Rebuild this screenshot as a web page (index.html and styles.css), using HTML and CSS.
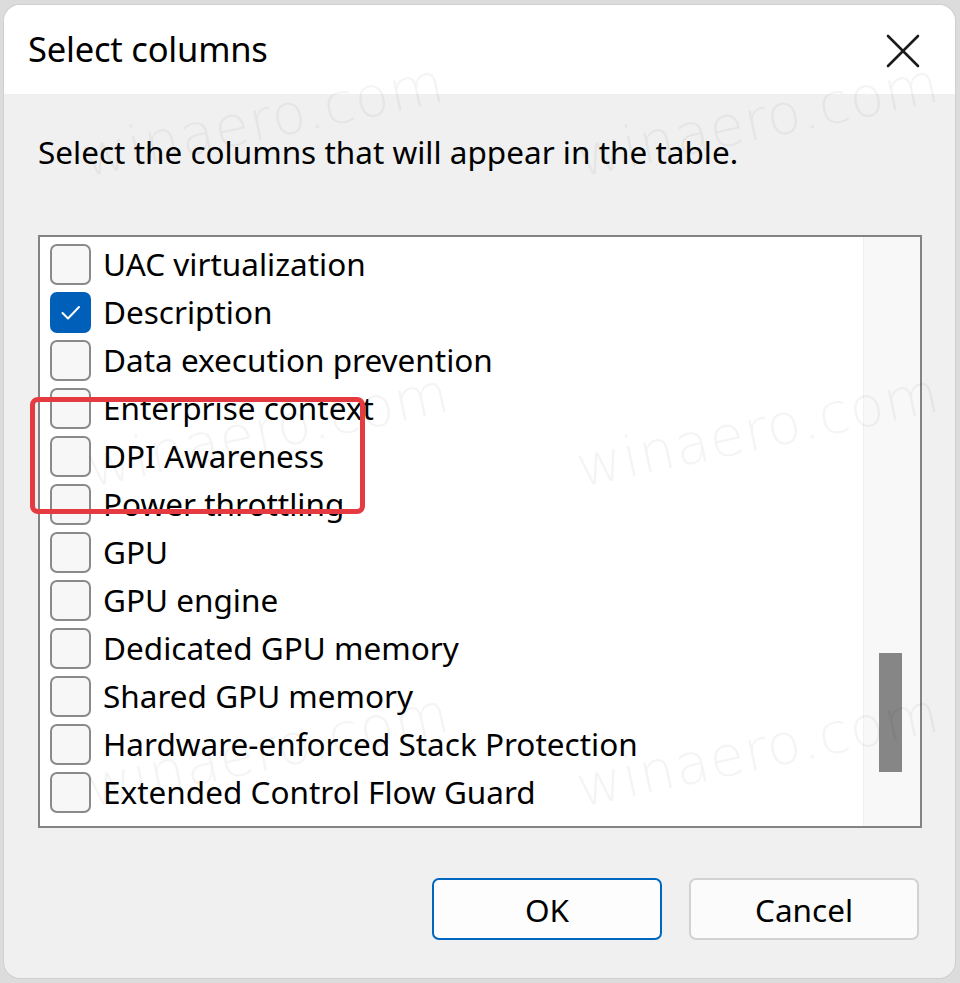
FILE: index.html
```html
<!DOCTYPE html>
<html lang="en">
<head>
<meta charset="utf-8">
<title>Select columns</title>
<link rel="stylesheet" href="styles.css">
</head>
<body>
<div class="dialog">
  <div class="titlebar">
    <span class="title">Select columns</span>
    <svg class="close" width="34" height="34" viewBox="0 0 34 34" aria-label="Close">
      <path d="M2 2 L32 32 M32 2 L2 32" stroke="#1b1b1b" stroke-width="2.6" fill="none" stroke-linecap="round"/>
    </svg>
  </div>
  <div class="content">
    <p class="intro">Select the columns that will appear in the table.</p>
    <div class="listbox">
      <div class="items">
        <div class="row"><span class="cb"></span><span class="label">UAC virtualization</span></div>
        <div class="row"><span class="cb checked"><svg width="41" height="41" viewBox="0 0 41 41"><path d="M12.5 21 L18 26.5 L29 15" stroke="#fff" stroke-width="2" fill="none" stroke-linecap="round" stroke-linejoin="round"/></svg></span><span class="label">Description</span></div>
        <div class="row"><span class="cb"></span><span class="label">Data execution prevention</span></div>
        <div class="row"><span class="cb"></span><span class="label">Enterprise context</span></div>
        <div class="row"><span class="cb"></span><span class="label">DPI Awareness</span></div>
        <div class="row"><span class="cb"></span><span class="label">Power throttling</span></div>
        <div class="row"><span class="cb"></span><span class="label">GPU</span></div>
        <div class="row"><span class="cb"></span><span class="label">GPU engine</span></div>
        <div class="row"><span class="cb"></span><span class="label">Dedicated GPU memory</span></div>
        <div class="row"><span class="cb"></span><span class="label">Shared GPU memory</span></div>
        <div class="row"><span class="cb"></span><span class="label">Hardware-enforced Stack Protection</span></div>
        <div class="row"><span class="cb"></span><span class="label">Extended Control Flow Guard</span></div>
      </div>
      <div class="scrollbar"><div class="thumb"></div></div>
    </div>
    <div class="buttons">
      <button class="btn default">OK</button>
      <button class="btn">Cancel</button>
    </div>
  </div>
  <div class="highlight"></div>
  <span class="wm wm1">winaero.com</span>
  <span class="wm wm2">winaero.com</span>
  <span class="wm wm3">winaero.com</span>
  <span class="wm wm4">winaero.com</span>
  <span class="wm wm5">winaero.com</span>
  <span class="wm wm6">winaero.com</span>
</div>
</body>
</html>
```

FILE: styles.css
```css
html, body {
  margin: 0;
  height: 100%;
}
body {
  background: #dcdcdc;
  padding: 5px 5px 5px 4px;
  box-sizing: border-box;
  font-family: "Noto Sans", "Open Sans", sans-serif;
  color: #000;
}
.dialog {
  position: relative;
  width: 951px;
  height: 973px;
  background: #f0f0f0;
  border-radius: 16px;
  overflow: hidden;
  box-shadow: 0 0 0 1px #cfcfcf;
}
.titlebar {
  height: 89px;
  background: #ffffff;
  display: flex;
  align-items: center;
  justify-content: space-between;
  padding: 0 35px 0 24px;
}
.title {
  font-size: 34.5px;
  letter-spacing: -0.2px;
  margin-top: -2px;
}
.close {
  margin-top: 2px;
}
.content {
  padding: 38px 0 0 34px;
}
.intro {
  margin: 0;
  font-size: 31.5px;
  line-height: 40px;
}
.listbox {
  margin-top: 63px;
  width: 884px;
  height: 593px;
  box-sizing: border-box;
  border: 2px solid #838383;
  background: #ffffff;
  display: flex;
}
.items {
  flex: 1;
  padding-top: 3px;
}
.row {
  height: 48px;
  display: flex;
  align-items: center;
  padding-left: 10px;
  gap: 12px;
}
.cb {
  width: 41px;
  height: 41px;
  box-sizing: border-box;
  border: 2px solid #8a8a8a;
  border-radius: 7px;
  background: #f7f7f7;
  flex: none;
  position: relative;
}
.cb.checked {
  background: #005fb8;
  border-color: #005fb8;
}
.cb.checked svg {
  position: absolute;
  left: -2px;
  top: -2px;
}
.label {
  font-size: 31.5px;
  line-height: 40px;
  white-space: nowrap;
}
.scrollbar {
  width: 56px;
  background: #f8f8f8;
  border-left: 1px solid #f0f0f0;
}
.thumb {
  width: 23px;
  height: 119px;
  margin: 416px 0 0 15px;
  background: #868686;
}
.buttons {
  display: flex;
  justify-content: flex-end;
  gap: 27px;
  margin-top: 50px;
  padding-right: 36px;
}
.btn {
  width: 230px;
  height: 62px;
  box-sizing: border-box;
  border: 2px solid #d2d2d2;
  border-radius: 7px;
  background: #fbfbfb;
  font-family: "Noto Sans", "Open Sans", sans-serif;
  font-size: 31.5px;
  color: #000;
  padding: 0;
}
.btn.default {
  border-color: #0067c0;
  background: #fdfdfd;
}
.highlight {
  position: absolute;
  left: 26px;
  top: 392px;
  width: 335px;
  height: 117px;
  box-sizing: border-box;
  border: 5px solid #e43a40;
  border-radius: 8px;
}
.wm {
  position: absolute;
  font-family: "DejaVu Sans", sans-serif;
  font-weight: 200;
  font-size: 56px;
  letter-spacing: 1px;
  color: rgba(0, 0, 0, 0.045);
  transform: rotate(-12deg);
  transform-origin: left bottom;
  white-space: nowrap;
  pointer-events: none;
}
.wm1 { left: 85px; top: 120px; }
.wm2 { left: 580px; top: 120px; }
.wm3 { left: 90px; top: 430px; }
.wm4 { left: 580px; top: 430px; }
.wm5 { left: 90px; top: 750px; }
.wm6 { left: 580px; top: 750px; }
```
